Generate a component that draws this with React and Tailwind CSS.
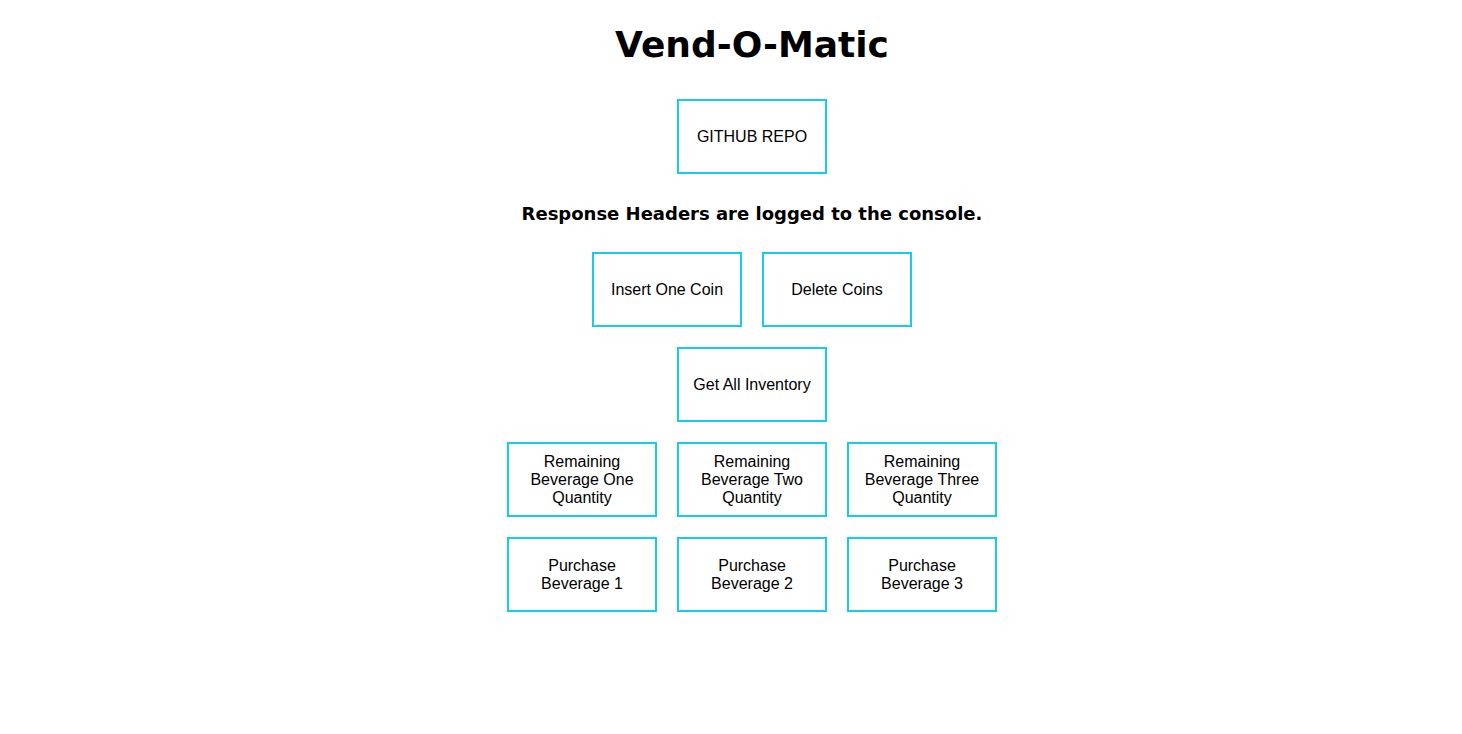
const beverageNames = ["One", "Two", "Three"];

const boxClasses =
  "flex h-[75px] w-[150px] items-center justify-center border-2 border-[#17caee] bg-white px-2 text-center font-['Liberation_Sans',Arial,sans-serif] text-base leading-[18px] text-black";

function Button({ children }) {
  return (
    <button type="button" className={boxClasses}>
      {children}
    </button>
  );
}

function Row({ children }) {
  return <div className="flex flex-wrap justify-center gap-5">{children}</div>;
}

export default function App() {
  return (
    <main className="flex flex-col items-center bg-white pt-[21px] pl-[42px] font-['DejaVu_Sans',Verdana,sans-serif] text-black">
      <h1 className="text-center text-4xl leading-[48px] font-bold">Vend-O-Matic</h1>
      <a href="https://github.com" className={`${boxClasses} mt-[30px]`}>
        GITHUB REPO
      </a>
      <h2 className="mt-7 text-center text-lg leading-6 font-bold">
        Response Headers are logged to the console.
      </h2>
      <section className="mt-[26px] flex flex-col gap-5">
        <Row>
          <Button>Insert One Coin</Button>
          <Button>Delete Coins</Button>
        </Row>
        <Row>
          <Button>Get All Inventory</Button>
        </Row>
        <Row>
          {beverageNames.map((name) => (
            <Button key={name}>
              Remaining
              <br />
              Beverage {name}
              <br />
              Quantity
            </Button>
          ))}
        </Row>
        <Row>
          {beverageNames.map((name, index) => (
            <Button key={name}>
              Purchase
              <br />
              Beverage {index + 1}
            </Button>
          ))}
        </Row>
      </section>
    </main>
  );
}
